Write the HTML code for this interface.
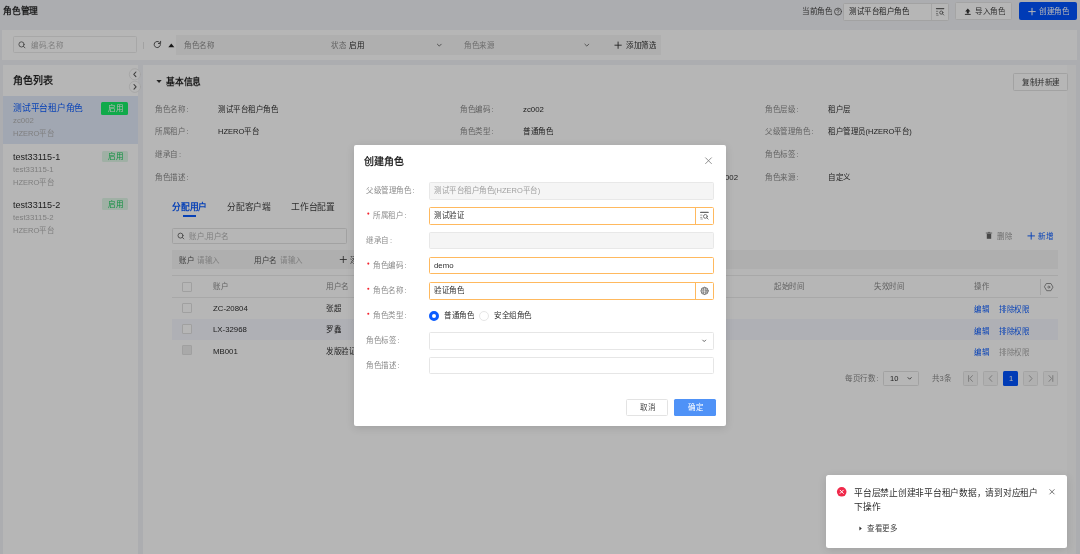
<!DOCTYPE html>
<html lang="zh-CN"><head><meta charset="utf-8">
<style>
*{box-sizing:border-box;margin:0;padding:0}
html,body{width:1080px;height:554px;overflow:hidden;background:#f2f3f7;font-family:"Liberation Sans",sans-serif;color:rgba(0,0,0,.85)}
.a{position:absolute}
.t{position:absolute;white-space:nowrap;font-size:12px;line-height:19.2px;height:19.2px;transform:scale(.625);transform-origin:0 0;margin-top:.7px;filter:opacity(1)}
.t i{font-style:normal;margin-left:2.5px}
.g{color:#8c8c8c}
.l{color:#b3b3b3}
.b{color:#0b5cff}
.bx{position:absolute;border:1px solid #e0e0e0;border-radius:1.5px;background:#fff}
.cb{position:absolute;left:182px;width:9.8px;height:9.8px;border:1px solid #e0e0e0;border-radius:1px;background:#fff}
svg{position:absolute;left:0;top:0;overflow:visible}
#mask{position:absolute;left:0;top:0;width:1080px;height:554px;background:rgba(0,0,0,.285)}
</style></head><body>
<!-- ===== header ===== -->
<div class="t" style="left:2.7px;top:4.8px;font-size:14px;font-weight:bold">角色管理</div>
<div class="t" style="left:801.6px;top:5.4px;color:#444">当前角色</div>
<div class="bx" style="left:842.5px;top:3.2px;width:106.1px;height:17.4px;border-color:#e3e3e3"></div>
<div class="t" style="left:848.6px;top:5.4px">测试平台租户角色</div>
<div class="a" style="left:931.4px;top:3.5px;width:1px;height:16.8px;background:#e8e8e8"></div>
<div class="bx" style="left:955.4px;top:2.2px;width:57px;height:17.8px;border-color:#e6e6e6"></div>
<div class="t" style="left:975.2px;top:5.4px;color:#444">导入角色</div>
<div class="a" style="left:1019.3px;top:2.2px;width:57.5px;height:17.8px;background:#0053ff;border-radius:2px"></div>
<div class="t" style="left:1039px;top:5.4px;color:#fff">创建角色</div>
<!-- ===== filter bar ===== -->
<div class="a" style="left:2.3px;top:29.8px;width:1074.4px;height:30.2px;background:#fff"></div>
<div class="bx" style="left:12.6px;top:36.3px;width:124.8px;height:16.9px;border-color:#ebebeb"></div>
<div class="t l" style="left:30.7px;top:39.4px">编码,名称</div>
<div class="a" style="left:143px;top:41.8px;width:1px;height:6.8px;background:#e3e3e3"></div>
<div class="a" style="left:176px;top:34.9px;width:484.6px;height:19.9px;background:#f5f5f5"></div>
<div class="t g" style="left:183.6px;top:39.4px">角色名称</div>
<div class="t g" style="left:331px;top:39.4px">状态</div>
<div class="t" style="left:349px;top:39.4px">启用</div>
<div class="t l" style="left:464px;top:39.4px;color:#9a9a9a">角色来源</div>
<div class="t" style="left:625.7px;top:39.4px;color:#333">添加筛选</div>
<!-- ===== left panel ===== -->
<div class="a" style="left:2.5px;top:64.7px;width:135.7px;height:490px;background:#fff"></div>
<div class="t" style="left:12.5px;top:74.8px;font-size:16px;font-weight:bold">角色列表</div>
<div class="a" style="left:2.5px;top:96.4px;width:135.7px;height:47.8px;background:#e2eafa"></div>
<div class="t b" style="left:12.7px;top:101.3px;font-size:14px">测试平台租户角色</div>
<div class="t l" style="left:12.7px;top:114.8px;font-size:12.5px">zc002</div>
<div class="t l" style="left:12.7px;top:127.2px">HZERO平台</div>
<div class="a" style="left:101.2px;top:101.9px;width:26.6px;height:12.8px;background:#17ef68;border-radius:1.5px"></div>
<div class="t" style="left:108px;top:102.1px;color:#fff">启用</div>
<div class="t" style="left:12.7px;top:150.2px;font-size:14.5px">test33115-1</div>
<div class="t l" style="left:12.7px;top:163.1px;font-size:12.5px">test33115-1</div>
<div class="t l" style="left:12.7px;top:176.1px">HZERO平台</div>
<div class="a" style="left:101.7px;top:150.7px;width:26px;height:11.6px;background:#e0f7e8;border-radius:1.5px"></div>
<div class="t" style="left:108px;top:150.3px;color:#17c95a">启用</div>
<div class="t" style="left:12.7px;top:198.7px;font-size:14.5px">test33115-2</div>
<div class="t l" style="left:12.7px;top:211.5px;font-size:12.5px">test33115-2</div>
<div class="t l" style="left:12.7px;top:224.7px">HZERO平台</div>
<div class="a" style="left:101.7px;top:198.3px;width:26px;height:11.6px;background:#e0f7e8;border-radius:1.5px"></div>
<div class="t" style="left:108px;top:198px;color:#17c95a">启用</div>
<!-- ===== main panel ===== -->
<div class="a" style="left:142.6px;top:64.7px;width:924.6px;height:490px;background:#fff"></div>
<div class="a" style="left:1067.2px;top:64.7px;width:9.3px;height:490px;background:#fbfbfb"></div>
<div class="t" style="left:165.5px;top:75.5px;font-size:14px;font-weight:bold">基本信息</div>
<div class="bx" style="left:1013.3px;top:73.3px;width:54.4px;height:17.4px;border-color:#e3e3e3"></div>
<div class="t" style="left:1021.5px;top:76.4px;color:#444">复制并新建</div>
<div class="t g" style="left:155.3px;top:103.3px">角色名称<i>:</i></div>
<div class="t" style="left:218px;top:103.3px">测试平台租户角色</div>
<div class="t g" style="left:155.3px;top:125.8px">所属租户<i>:</i></div>
<div class="t" style="left:218px;top:125.8px">HZERO平台</div>
<div class="t g" style="left:155.3px;top:148.4px">继承自<i>:</i></div>
<div class="t g" style="left:155.3px;top:171.3px">角色描述<i>:</i></div>
<div class="t g" style="left:460px;top:103.3px">角色编码<i>:</i></div>
<div class="t" style="left:523px;top:103.3px;font-size:12.5px">zc002</div>
<div class="t g" style="left:460px;top:125.8px">角色类型<i>:</i></div>
<div class="t" style="left:523px;top:125.8px">普通角色</div>
<div class="t" style="left:725px;top:171.3px;font-size:12.5px">002</div>
<div class="t g" style="left:765px;top:103.1px">角色层级<i>:</i></div>
<div class="t" style="left:827.7px;top:103.1px">租户层</div>
<div class="t g" style="left:765px;top:125.5px">父级管理角色<i>:</i></div>
<div class="t" style="left:827.7px;top:125.5px">租户管理员(HZERO平台)</div>
<div class="t g" style="left:765px;top:148.1px">角色标签<i>:</i></div>
<div class="t g" style="left:765px;top:171.3px">角色来源<i>:</i></div>
<div class="t" style="left:828.3px;top:171.3px">自定义</div>
<!-- tabs -->
<div class="t b" style="left:171.8px;top:200.4px;font-size:14px;font-weight:bold">分配用户</div>
<div class="a" style="left:182.5px;top:215px;width:13px;height:1.8px;background:#0b5cff"></div>
<div class="t" style="left:227px;top:200.4px;font-size:14px;color:#444">分配客户端</div>
<div class="t" style="left:290.8px;top:200.4px;font-size:14px;color:#444">工作台配置</div>
<div class="bx" style="left:171.8px;top:227.7px;width:174.9px;height:16.6px;border-color:#e3e3e3"></div>
<div class="t l" style="left:189px;top:230.4px">账户,用户名</div>
<div class="t g" style="left:996.8px;top:230.3px;color:#999">删除</div>
<div class="t b" style="left:1038px;top:230.3px">新增</div>
<div class="a" style="left:171.7px;top:249.6px;width:886.2px;height:19.8px;background:#f5f5f5"></div>
<div class="t" style="left:178.9px;top:253.9px;color:#555">账户</div>
<div class="t l" style="left:197px;top:253.9px">请输入</div>
<div class="t" style="left:254px;top:253.9px;color:#555">用户名</div>
<div class="t l" style="left:280px;top:253.9px">请输入</div>
<div class="t" style="left:350.2px;top:253.9px;color:#333">添加</div>
<!-- table -->
<div class="a" style="left:171.7px;top:275px;width:886.2px;height:1px;background:#ececec"></div>
<div class="a" style="left:171.7px;top:296.8px;width:886.2px;height:1px;background:#ececec"></div>
<div class="a" style="left:171.7px;top:319.2px;width:886.2px;height:20.9px;background:#f6f7fe"></div>
<div class="a" style="left:1040px;top:278.5px;width:1px;height:16.5px;background:#e3e3e3"></div>
<div class="cb" style="top:281.8px"></div>
<div class="cb" style="top:303px"></div>
<div class="cb" style="top:324.4px"></div>
<div class="cb" style="top:345.4px;background:#ededed"></div>
<div class="t g" style="left:212.7px;top:280.3px">账户</div>
<div class="t g" style="left:325.5px;top:280.3px">用户名</div>
<div class="t g" style="left:774px;top:280.3px">起始时间</div>
<div class="t g" style="left:874px;top:280.3px">失效时间</div>
<div class="t g" style="left:974px;top:280.3px">操作</div>
<div class="t" style="left:212.9px;top:302.3px;font-size:12.5px">ZC-20804</div>
<div class="t" style="left:325.5px;top:302.3px">张超</div>
<div class="t" style="left:212.9px;top:323.7px;font-size:12.5px">LX-32968</div>
<div class="t" style="left:325.5px;top:323.7px">罗鑫</div>
<div class="t" style="left:212.9px;top:345px;font-size:12.5px">MB001</div>
<div class="t" style="left:325.5px;top:345px">发版验证</div>
<div class="t b" style="left:974px;top:303.1px">编辑</div>
<div class="t b" style="left:999.3px;top:303.1px">排除权限</div>
<div class="t b" style="left:974px;top:325.0px">编辑</div>
<div class="t b" style="left:999.3px;top:325.0px">排除权限</div>
<div class="t b" style="left:974px;top:346.3px">编辑</div>
<div class="t l" style="left:999.3px;top:346.3px;color:#aaa">排除权限</div>
<!-- pagination -->
<div class="t g" style="left:844.7px;top:372.3px">每页行数<i>:</i></div>
<div class="bx" style="left:883px;top:371px;width:35.7px;height:15px;border-color:#e3e3e3"></div>
<div class="t" style="left:890px;top:372.3px">10</div>
<div class="t g" style="left:931.7px;top:372.3px">共3条</div>
<div class="bx" style="left:963.3px;top:371px;width:14.4px;height:15px;background:#f7f7f7;border-color:#e6e6e6"></div>
<div class="bx" style="left:983.3px;top:371px;width:14.4px;height:15px;background:#f7f7f7;border-color:#e6e6e6"></div>
<div class="a" style="left:1003px;top:371px;width:15px;height:15px;background:#0053ff;border-radius:1.5px"></div>
<div class="t" style="left:1008.7px;top:372.3px;color:#fff">1</div>
<div class="bx" style="left:1023.3px;top:371px;width:14.4px;height:15px;background:#f7f7f7;border-color:#e6e6e6"></div>
<div class="bx" style="left:1043.3px;top:371px;width:14.7px;height:15px;background:#f7f7f7;border-color:#e6e6e6"></div>
<!-- icons under mask -->
<svg width="1080" height="554" viewBox="0 0 1080 554" fill="none" stroke-linecap="round" stroke-linejoin="round">
 <!-- ? icon -->
 <circle cx="838" cy="11.6" r="3.5" stroke="#555" stroke-width=".8"/>
 <path d="M836.9 10.6a1.1 1.1 0 1 1 1.6 1c-.4.2-.5.5-.5.9" stroke="#555" stroke-width=".7"/>
 <circle cx="838" cy="13.9" r=".4" fill="#555"/>
 <!-- header input icon -->
 <path d="M936.4 8.6h7.4" stroke="#666" stroke-width="1.1"/>
 <path d="M936.4 11.3h1.4M936.4 13.6h1.2M936.6 15.2h1.6" stroke="#888" stroke-width=".8"/>
 <circle cx="941.3" cy="12.6" r="1.6" stroke="#666" stroke-width=".9"/>
 <path d="M942.5 13.8l1.2 1.2" stroke="#666" stroke-width=".9"/>
 <!-- upload -->
 <path d="M967.8 8.4l-2.6 3h1.6v2h2v-2h1.6z" fill="#333"/>
 <path d="M965.3 14.4h5" stroke="#444" stroke-width="1"/>
 <!-- plus in create -->
 <path d="M1032 8.3v6.6M1028.7 11.6h6.6" stroke="#fff" stroke-width="1"/>
 <!-- filter search -->
 <circle cx="21.5" cy="44.4" r="2.6" stroke="#666" stroke-width=".9"/>
 <path d="M23.4 46.3l1.6 1.6" stroke="#666" stroke-width=".9"/>
 <!-- refresh -->
 <path d="M160.4 44.6a3.1 3.1 0 1 1-1-2.4" stroke="#444" stroke-width=".9"/>
 <path d="M160.6 41.3v2.2h-2.2" stroke="#444" stroke-width=".9"/>
 <!-- triangle up -->
 <path d="M168.3 47.2l3-3.6 3 3.6z" fill="#222"/>
 <!-- chevrons -->
 <path d="M437.4 44.2l1.9 1.9 1.9-1.9M584.9 44.2l1.9 1.9 1.9-1.9" stroke="#555" stroke-width=".8"/>
 <!-- plus add filter -->
 <path d="M618.1 42v6.4M614.9 45.2h6.4" stroke="#333" stroke-width=".9"/>
 <!-- collapse buttons -->
 <circle cx="134.9" cy="74.3" r="5.6" fill="#fff" stroke="#e3e3e3" stroke-width=".7"/>
 <circle cx="134.9" cy="86.8" r="5.6" fill="#fff" stroke="#e3e3e3" stroke-width=".7"/>
 <path d="M135.9 72l-2.1 2.3 2.1 2.3" stroke="#555" stroke-width="1.05"/>
 <path d="M134 84.5l2.1 2.3-2.1 2.3" stroke="#555" stroke-width="1.05"/>
 <!-- triangle down -->
 <path d="M156.4 80h5.3l-2.65 3.1z" fill="#333"/>
 <!-- tab search -->
 <circle cx="180.5" cy="235.6" r="2.5" stroke="#666" stroke-width=".9"/>
 <path d="M182.3 237.4l1.5 1.5" stroke="#666" stroke-width=".9"/>
 <!-- trash -->
 <path d="M986.8 233.6h4.4v5.2h-4.4z" fill="#666"/>
 <path d="M986.2 233h5.6M988.2 232.4h1.6" stroke="#666" stroke-width=".7"/>
 <!-- plus new -->
 <path d="M1031.2 232.6v6.6M1027.9 235.9h6.6" stroke="#0b5cff" stroke-width=".95"/>
 <!-- plus add (filter row) -->
 <path d="M343.3 256.4v6.2M340.2 259.5h6.2" stroke="#333" stroke-width=".8"/>
 <!-- settings -->
 <path d="M1046.7 283.5h4.2l2.1 3.6-2.1 3.6h-4.2l-2.1-3.6z" stroke="#777" stroke-width=".8"/>
 <circle cx="1048.8" cy="287.1" r="1" stroke="#777" stroke-width=".7"/>
 <!-- pagination icons -->
 <path d="M908 377.6l1.6 1.6 1.6-1.6" stroke="#444" stroke-width=".9"/>
 <path d="M968.6 375.6v5.8M972.4 375.6l-2.6 2.9 2.6 2.9" stroke="#999" stroke-width=".8"/>
 <path d="M991.8 375.6l-2.6 2.9 2.6 2.9" stroke="#999" stroke-width=".8"/>
 <path d="M1029.4 375.6l2.6 2.9-2.6 2.9" stroke="#999" stroke-width=".8"/>
 <path d="M1049 375.6l2.6 2.9-2.6 2.9M1052.8 375.6v5.8" stroke="#999" stroke-width=".8"/>
</svg>

<div id="mask"></div>
<!-- ===== modal ===== -->
<div class="a" style="left:353.7px;top:144.6px;width:372.6px;height:281px;background:#fff;border-radius:2px;box-shadow:0 2px 8px rgba(0,0,0,.12)"></div>
<div class="t" style="left:363.6px;top:155.5px;font-size:16px;font-weight:bold">创建角色</div>
<div class="t g" style="left:366.1px;top:184.4px">父级管理角色<i>:</i></div>
<div class="bx" style="left:429px;top:182.2px;width:284.7px;height:17.4px;background:#f5f5f5;border-color:#e8e8e8"></div>
<div class="t" style="left:434.3px;top:184.6px;color:#a0a0a0">测试平台租户角色(HZERO平台)</div>
<div class="t g" style="left:372.6px;top:209.3px">所属租户<i>:</i></div>
<div class="bx" style="left:429px;top:207.2px;width:284.7px;height:17.4px;border-color:#ffb95e"></div>
<div class="a" style="left:695.3px;top:207.2px;width:1px;height:17.4px;background:#ffb95e"></div>
<div class="t" style="left:434.3px;top:209.3px">测试验证</div>
<div class="t g" style="left:366.1px;top:234.3px">继承自<i>:</i></div>
<div class="bx" style="left:429px;top:231.9px;width:284.7px;height:17.6px;background:#f5f5f5;border-color:#e8e8e8"></div>
<div class="t g" style="left:372.6px;top:259.3px">角色编码<i>:</i></div>
<div class="bx" style="left:429px;top:257px;width:284.7px;height:17.4px;border-color:#ffb95e"></div>
<div class="t" style="left:434.3px;top:259.3px;font-size:12.5px">demo</div>
<div class="t g" style="left:372.6px;top:284.5px">角色名称<i>:</i></div>
<div class="bx" style="left:429px;top:282.2px;width:284.7px;height:17.4px;border-color:#ffb95e"></div>
<div class="a" style="left:695.3px;top:282.2px;width:1px;height:17.4px;background:#ffb95e"></div>
<div class="t" style="left:434.3px;top:284.5px">验证角色</div>
<div class="t g" style="left:372.6px;top:309.5px">角色类型<i>:</i></div>
<div class="a" style="left:428.9px;top:310.6px;width:10.4px;height:10.4px;border-radius:50%;border:3px solid #0b5cff"></div>
<div class="t" style="left:443.7px;top:309.5px">普通角色</div>
<div class="a" style="left:478.9px;top:310.7px;width:10.2px;height:10.2px;border-radius:50%;border:1px solid #e6e6e6"></div>
<div class="t" style="left:493.7px;top:309.5px">安全组角色</div>
<div class="t g" style="left:366.1px;top:334.7px">角色标签<i>:</i></div>
<div class="bx" style="left:429px;top:332.2px;width:284.7px;height:17.4px;border-color:#e6e6e6"></div>
<div class="t g" style="left:366.1px;top:359.5px">角色描述<i>:</i></div>
<div class="bx" style="left:429px;top:357px;width:284.7px;height:17.4px;border-color:#e6e6e6"></div>
<div class="bx" style="left:626.3px;top:398.9px;width:42.2px;height:17px;border-color:#e3e3e3"></div>
<div class="t" style="left:640px;top:401.2px;color:#444">取消</div>
<div class="a" style="left:673.7px;top:398.9px;width:42.6px;height:17px;background:#4f92f7;border-radius:1.5px"></div>
<div class="t" style="left:687.5px;top:401.2px;color:#fff">确定</div>
<!-- ===== toast ===== -->
<div class="a" style="left:826.4px;top:475px;width:240.6px;height:73.2px;background:#fff;border-radius:2.5px;box-shadow:0 2px 8px rgba(0,0,0,.12)"></div>
<div class="t" style="left:854.2px;top:485.2px;font-size:14px;line-height:22.4px;height:auto;white-space:normal;width:298px">平台层禁止创建非平台租户数据，请到对应租户下操作</div>
<div class="t" style="left:866.7px;top:522.8px;color:#444">查看更多</div>
<!-- icons above mask -->
<svg width="1080" height="554" viewBox="0 0 1080 554" fill="none" stroke-linecap="round" stroke-linejoin="round">
 <path d="M705.6 157.8l5.8 5.8M711.4 157.8l-5.8 5.8" stroke="#777" stroke-width=".8"/>
 <path d="M700.6 212.4h7.6" stroke="#666" stroke-width="1.1"/>
 <path d="M700.6 215.1h1.4M700.6 217.4h1.2M700.8 219h1.6" stroke="#888" stroke-width=".8"/>
 <circle cx="705.4" cy="216.4" r="1.9" stroke="#666" stroke-width=".9"/>
 <path d="M706.8 217.8l1.3 1.3" stroke="#666" stroke-width=".9"/>
 <circle cx="704.6" cy="290.9" r="3.6" stroke="#666" stroke-width=".8"/>
 <ellipse cx="704.6" cy="290.9" rx="1.5" ry="3.6" stroke="#666" stroke-width=".7"/>
 <path d="M701 290.9h7.2M701.5 289h6.2M701.5 292.8h6.2" stroke="#666" stroke-width=".6"/>
 <path d="M702.7 340.1l1.5 1.5 1.5-1.5" stroke="#555" stroke-width=".9"/>
 <circle cx="368.3" cy="213.6" r="1.05" fill="#f5222d"/>
 <circle cx="368.3" cy="263.6" r="1.05" fill="#f5222d"/>
 <circle cx="368.3" cy="288.8" r="1.05" fill="#f5222d"/>
 <circle cx="368.3" cy="313.8" r="1.05" fill="#f5222d"/>
 <circle cx="841.7" cy="491.8" r="4.8" fill="#f0294a"/>
 <path d="M840.1 490.2l3.2 3.2M843.3 490.2l-3.2 3.2" stroke="#fff" stroke-width="1"/>
 <path d="M1049.8 489.6l4.4 4.4M1054.2 489.6l-4.4 4.4" stroke="#666" stroke-width=".9"/>
 <path d="M859.4 526.6l2.4 1.9-2.4 1.9z" fill="#333"/>
</svg>
</body></html>
